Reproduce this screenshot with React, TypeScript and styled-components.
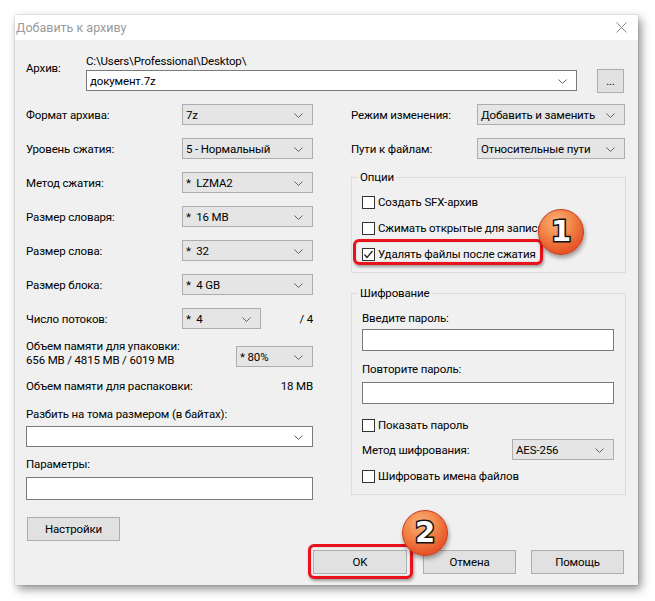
import React from 'react';
import styled, { createGlobalStyle } from 'styled-components';

const GlobalStyle = createGlobalStyle`
  html, body {
    margin: 0;
    padding: 0;
    background: #ffffff;
  }
  body {
    font-family: Roboto, "Liberation Sans", Arial, sans-serif;
    font-size: 11.5px;
    letter-spacing: -0.15px;
    color: #000;
  }
`;

const Page = styled.div`
  width: 655px;
  height: 601px;
  padding: 15px 0 0 15px;
  box-sizing: border-box;
`;

const Window = styled.div`
  width: 623px;
  height: 570px;
  background: #f0f0f0;
  display: flex;
  flex-direction: column;
  box-shadow: 0 0 0 1px rgba(0, 0, 0, 0.06), 3px 4px 9px rgba(0, 0, 0, 0.45);
`;

const TitleBar = styled.div`
  height: 25px;
  flex: 0 0 25px;
  background: #fff;
  display: flex;
  align-items: center;
  justify-content: space-between;
  padding: 0 11px 0 1px;
  color: #9a9a9a;
  font-size: 12.5px;
  letter-spacing: 0;
`;

const Body = styled.div`
  flex: 1;
  display: flex;
  flex-direction: column;
  padding: 14px 12px 14px 11px;
`;

const ArchiveRow = styled.div`
  display: flex;
`;

const ArchiveLabel = styled.div`
  width: 60px;
  padding-top: 7px;
  line-height: 14px;
`;

const ArchiveField = styled.div`
  flex: 1;
  display: flex;
  flex-direction: column;
`;

const PathText = styled.div`
  line-height: 14px;
`;

const ArchiveInputs = styled.div`
  display: flex;
  align-items: flex-start;
  gap: 20px;
  margin-top: 1px;
`;

const Columns = styled.div`
  display: flex;
  gap: 38px;
  margin-top: 11px;
`;

const LeftColumn = styled.div`
  width: 287px;
  display: flex;
  flex-direction: column;
`;

const RightColumn = styled.div`
  width: 275px;
  display: flex;
  flex-direction: column;
`;

const Stack = styled.div`
  display: flex;
  flex-direction: column;
  gap: 13px;
`;

const Row = styled.div<{ $labelWidth: number }>`
  display: flex;
  align-items: center;
  height: 21px;
  & > span:first-child {
    flex: 0 0 ${(p) => p.$labelWidth}px;
  }
`;

const Text = styled.div<{ $mt?: number; $right?: boolean }>`
  line-height: 14px;
  margin-top: ${(p) => p.$mt ?? 0}px;
  text-align: ${(p) => (p.$right ? 'right' : 'left')};
`;

const Combo = styled.div<{ $w?: number; $editable?: boolean; $h?: number; $mt?: number }>`
  position: relative;
  box-sizing: border-box;
  width: ${(p) => (p.$w ? `${p.$w}px` : '100%')};
  height: ${(p) => p.$h ?? 21}px;
  margin-top: ${(p) => p.$mt ?? 0}px;
  flex: 0 0 auto;
  background: ${(p) => (p.$editable ? '#ffffff' : '#e5e5e5')};
  border: 1px solid ${(p) => (p.$editable ? '#7a7a7a' : '#adadad')};
  display: flex;
  align-items: center;
  padding: 0 22px 0 3px;
  white-space: pre;
  overflow: hidden;
`;

const ChevronBox = styled.svg`
  position: absolute;
  right: 9px;
  top: 50%;
  margin-top: -2px;
`;

const Chevron = () => (
  <ChevronBox width="9" height="5" viewBox="0 0 9 5">
    <polyline points="0.5,0.5 4.5,4.5 8.5,0.5" fill="none" stroke="#606060" strokeWidth="1" />
  </ChevronBox>
);

const Select: React.FC<{ value?: string; w?: number; editable?: boolean; h?: number; mt?: number }> = ({
  value,
  w,
  editable,
  h,
  mt,
}) => (
  <Combo $w={w} $editable={editable} $h={h} $mt={mt}>
    {value}
    <Chevron />
  </Combo>
);

const Input = styled.div<{ $mt?: number; $h?: number }>`
  box-sizing: border-box;
  width: 100%;
  height: ${(p) => p.$h ?? 22}px;
  margin-top: ${(p) => p.$mt ?? 0}px;
  background: #fff;
  border: 1px solid #7a7a7a;
`;

const Button = styled.div<{ $w: number; $h?: number }>`
  box-sizing: border-box;
  width: ${(p) => p.$w}px;
  height: ${(p) => p.$h ?? 24}px;
  flex: 0 0 auto;
  background: #e1e1e1;
  border: 1px solid #adadad;
  display: flex;
  align-items: center;
  justify-content: center;
`;

const MemoryRow = styled.div`
  display: flex;
  justify-content: space-between;
  align-items: flex-end;
  margin-top: 10px;
`;

const SplitRow = styled.div`
  display: flex;
  justify-content: space-between;
  margin-top: 12px;
  line-height: 14px;
`;

const SettingsButton = styled(Button)`
  margin: 17px 0 0 1px;
`;

const Group = styled.fieldset<{ $mt: number }>`
  margin: ${(p) => p.$mt}px 0 0 0;
  padding: 0 11px 10px 10px;
  border: 1px solid #dcdcdc;
  min-width: 0;
`;

const Legend = styled.legend`
  margin-left: -4px;
  padding: 0 2px;
  line-height: 14px;
`;

const OptionList = styled.div`
  display: flex;
  flex-direction: column;
  gap: 10px;
  padding-top: 10px;
`;

const CheckRow = styled.label<{ $mt?: number }>`
  position: relative;
  display: flex;
  align-items: center;
  height: 16px;
  gap: 3px;
  margin-top: ${(p) => p.$mt ?? 0}px;
  white-space: nowrap;
`;

const Box = styled.span`
  box-sizing: border-box;
  width: 13px;
  height: 13px;
  background: #fff;
  border: 1px solid #333;
  display: flex;
  align-items: center;
  justify-content: center;
`;

const CheckBox: React.FC<{ checked?: boolean }> = ({ checked }) => (
  <Box>
    {checked && (
      <svg width="11" height="11" viewBox="0 0 11 11">
        <polyline points="1.5,5.5 4,8.5 9.5,2" fill="none" stroke="#222" strokeWidth="1.3" />
      </svg>
    )}
  </Box>
);

const Highlight = styled.span<{ $l: number; $t: number; $w: number; $h: number }>`
  position: absolute;
  left: ${(p) => p.$l}px;
  top: ${(p) => p.$t}px;
  width: ${(p) => p.$w}px;
  height: ${(p) => p.$h}px;
  box-sizing: border-box;
  border: 3px solid #e8121c;
  border-radius: 6px;
  box-shadow: 1px 2px 3px rgba(0, 0, 0, 0.35), inset 0 0 1px rgba(120, 0, 0, 0.6);
  pointer-events: none;
`;

const Badge = styled.span<{ $l: number; $t: number }>`
  position: absolute;
  left: ${(p) => p.$l}px;
  top: ${(p) => p.$t}px;
  width: 46px;
  height: 46px;
  border-radius: 50%;
  box-sizing: border-box;
  background: radial-gradient(circle at 40% 28%, #fbb27c 0%, #f38a4c 35%, #e85a2a 70%, #d4401c 100%);
  border: 1px solid #c8381a;
  box-shadow: 1px 3px 4px rgba(0, 0, 0, 0.35);
  display: flex;
  align-items: center;
  justify-content: center;
  font-family: "DejaVu Sans", "Liberation Sans", sans-serif;
  font-weight: bold;
  font-size: 29px;
  letter-spacing: 0;
  color: #fff;
  -webkit-text-stroke: 3px #111;
  paint-order: stroke fill;
  line-height: 1;
  padding-bottom: 1px;
`;

const EncRow = styled.div<{ $mt: number }>`
  display: flex;
  align-items: center;
  justify-content: space-between;
  height: 21px;
  margin-top: ${(p) => p.$mt}px;
`;

const Footer = styled.div`
  display: flex;
  justify-content: flex-end;
  gap: 15px;
  margin-top: 9px;
  padding-right: 2px;
`;

const OkWrap = styled.span`
  position: relative;
  display: flex;
  margin-right: 1px;
`;

const CloseIcon = () => (
  <svg width="11" height="11" viewBox="0 0 11 11">
    <path d="M0.5 0.5 L10.5 10.5 M10.5 0.5 L0.5 10.5" stroke="#8a8a8a" strokeWidth="1" />
  </svg>
);

const App: React.FC = () => (
  <>
    <GlobalStyle />
    <Page>
      <Window>
        <TitleBar>
          <span>Добавить к архиву</span>
          <CloseIcon />
        </TitleBar>
        <Body>
          <ArchiveRow>
            <ArchiveLabel>Архив:</ArchiveLabel>
            <ArchiveField>
              <PathText>C:\Users\Professional\Desktop\</PathText>
              <ArchiveInputs>
                <Select value="документ.7z" editable w={491} mt={1} />
                <Button $w={27} $h={24}>...</Button>
              </ArchiveInputs>
            </ArchiveField>
          </ArchiveRow>

          <Columns>
            <LeftColumn>
              <Stack>
                <Row $labelWidth={156}>
                  <span>Формат архива:</span>
                  <Select value="7z" w={131} />
                </Row>
                <Row $labelWidth={156}>
                  <span>Уровень сжатия:</span>
                  <Select value="5 - Нормальный" w={131} />
                </Row>
                <Row $labelWidth={156}>
                  <span>Метод сжатия:</span>
                  <Select value="*  LZMA2" w={131} />
                </Row>
                <Row $labelWidth={156}>
                  <span>Размер словаря:</span>
                  <Select value="*  16 MB" w={131} />
                </Row>
                <Row $labelWidth={156}>
                  <span>Размер слова:</span>
                  <Select value="*  32" w={131} />
                </Row>
                <Row $labelWidth={156}>
                  <span>Размер блока:</span>
                  <Select value="*  4 GB" w={131} />
                </Row>
                <Row $labelWidth={156}>
                  <span>Число потоков:</span>
                  <Select value="*  4" w={79} />
                  <Text $right style={{ flex: 1 }}>/ 4</Text>
                </Row>
              </Stack>

              <MemoryRow>
                <div>
                  <Text>Объем памяти для упаковки:</Text>
                  <Text>656 MB / 4815 MB / 6019 MB</Text>
                </div>
                <Select value="* 80%" w={77} />
              </MemoryRow>

              <SplitRow>
                <span>Объем памяти для распаковки:</span>
                <span>18 MB</span>
              </SplitRow>

              <Text $mt={14}>Разбить на тома размером (в байтах):</Text>
              <Select editable mt={5} />

              <Text $mt={10}>Параметры:</Text>
              <Input $mt={6} $h={23} />

              <SettingsButton $w={93}>Настройки</SettingsButton>
            </LeftColumn>

            <RightColumn>
              <Stack>
                <Row $labelWidth={126}>
                  <span>Режим изменения:</span>
                  <Select value="Добавить и заменить" w={148} />
                </Row>
                <Row $labelWidth={126}>
                  <span>Пути к файлам:</span>
                  <Select value="Относительные пути" w={148} />
                </Row>
              </Stack>

              <Group $mt={11}>
                <Legend>Опции</Legend>
                <OptionList>
                  <CheckRow>
                    <CheckBox />
                    Создать SFX-архив
                  </CheckRow>
                  <CheckRow>
                    <CheckBox />
                    Сжимать открытые для записи
                  </CheckRow>
                  <CheckRow>
                    <CheckBox checked />
                    Удалять файлы после сжатия
                    <Highlight $l={-9} $t={-7} $w={190} $h={26} />
                    <Badge $l={176} $t={-37}>1</Badge>
                  </CheckRow>
                </OptionList>
              </Group>

              <Group $mt={13}>
                <Legend>Шифрование</Legend>
                <Text $mt={11}>Введите пароль:</Text>
                <Input $mt={4} />
                <Text $mt={11}>Повторите пароль:</Text>
                <Input $mt={6} />
                <CheckRow $mt={13}>
                  <CheckBox />
                  Показать пароль
                </CheckRow>
                <EncRow $mt={6}>
                  <span>Метод шифрования:</span>
                  <Select value="AES-256" w={102} />
                </EncRow>
                <CheckRow $mt={8}>
                  <CheckBox />
                  Шифровать имена файлов
                </CheckRow>
              </Group>
            </RightColumn>
          </Columns>

          <Footer>
            <OkWrap>
              <Button $w={94}>OK</Button>
              <Highlight $l={-5} $t={-6} $w={105} $h={35} />
              <Badge $l={89} $t={-40}>2</Badge>
            </OkWrap>
            <Button $w={93}>Отмена</Button>
            <Button $w={93}>Помощь</Button>
          </Footer>
        </Body>
      </Window>
    </Page>
  </>
);

export default App;
